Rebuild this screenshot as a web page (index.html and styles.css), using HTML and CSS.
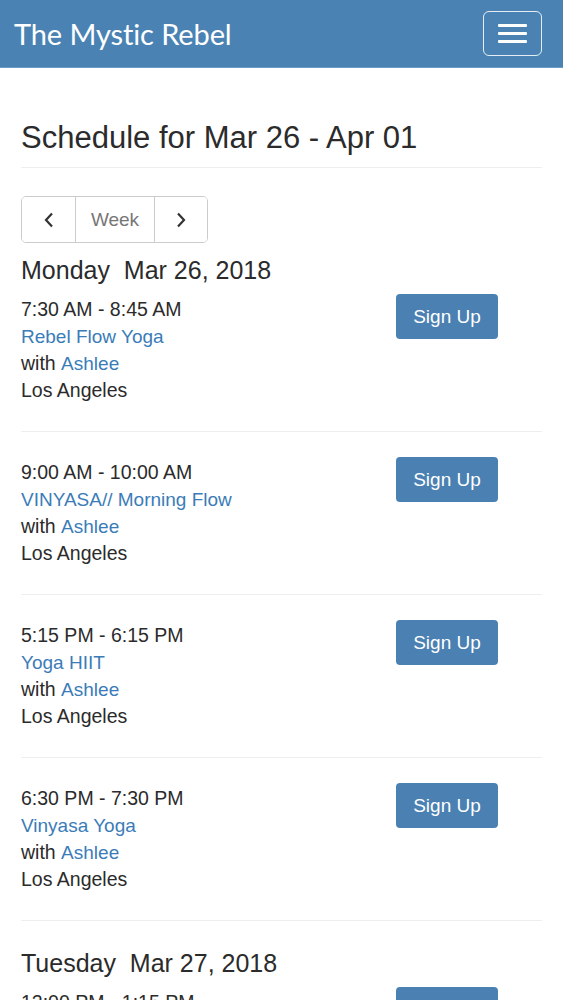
FILE: index.html
```html
<!DOCTYPE html>
<html lang="en">
<head>
    <meta charset="UTF-8">
    <meta name="viewport" content="width=device-width, initial-scale=1.0">
    <title>Schedule | The Mystic Rebel</title>
    <link rel="stylesheet" href="styles.css">
</head>
<body>
<nav class="navbar">
    <a class="brand" href="#">The Mystic Rebel</a>
    <button class="toggler" aria-label="Menu">
        <span></span><span></span><span></span>
    </button>
</nav>

<main class="container">
    <h1 class="page-title">Schedule for Mar 26 - Apr 01</h1>
    <hr class="title-rule">

    <div class="week-nav">
        <button class="nav-btn" aria-label="Previous week">
            <svg width="12" height="16" viewBox="0 0 12 16"><polyline points="9,1.5 3,8 9,14.5" fill="none" stroke="#333" stroke-width="2.2"/></svg>
        </button>
        <button class="nav-btn week">Week</button>
        <button class="nav-btn" aria-label="Next week">
            <svg width="12" height="16" viewBox="0 0 12 16"><polyline points="3,1.5 9,8 3,14.5" fill="none" stroke="#333" stroke-width="2.2"/></svg>
        </button>
    </div>

    <section class="day">
        <h3>Monday&nbsp; Mar 26, 2018</h3>

        <div class="session">
            <div class="info">
                <div>7:30 AM - 8:45 AM</div>
                <a href="#">Rebel Flow Yoga</a>
                <div>with <a href="#">Ashlee</a></div>
                <div>Los Angeles</div>
            </div>
            <button class="signup">Sign Up</button>
        </div>

        <div class="session">
            <div class="info">
                <div>9:00 AM - 10:00 AM</div>
                <a href="#">VINYASA// Morning Flow</a>
                <div>with <a href="#">Ashlee</a></div>
                <div>Los Angeles</div>
            </div>
            <button class="signup">Sign Up</button>
        </div>

        <div class="session">
            <div class="info">
                <div>5:15 PM - 6:15 PM</div>
                <a href="#">Yoga HIIT</a>
                <div>with <a href="#">Ashlee</a></div>
                <div>Los Angeles</div>
            </div>
            <button class="signup">Sign Up</button>
        </div>

        <div class="session">
            <div class="info">
                <div>6:30 PM - 7:30 PM</div>
                <a href="#">Vinyasa Yoga</a>
                <div>with <a href="#">Ashlee</a></div>
                <div>Los Angeles</div>
            </div>
            <button class="signup">Sign Up</button>
        </div>
    </section>

    <section class="day">
        <h3>Tuesday&nbsp; Mar 27, 2018</h3>

        <div class="session">
            <div class="info">
                <div>12:00 PM - 1:15 PM</div>
                <a href="#">Rebel Flow Yoga</a>
                <div>with <a href="#">Ashlee</a></div>
                <div>Los Angeles</div>
            </div>
            <button class="signup">Sign Up</button>
        </div>
    </section>
</main>
</body>
</html>
```

FILE: styles.css
```css
body {
    margin: 0;
    font-family: "Liberation Sans", Arial, sans-serif;
    color: #2b2b2b;
    background: #fff;
}

a {
    color: #3b7cb8;
    text-decoration: none;
}

.navbar {
    display: flex;
    align-items: center;
    justify-content: space-between;
    height: 67px;
    padding: 0 21px 0 14px;
    background-color: #4a83b3;
    border-bottom: 1px solid #6d9cc4;
}

.brand {
    color: #fff;
    font-family: Lato, sans-serif;
    font-size: 29px;
    letter-spacing: -0.1px;
}

.toggler {
    display: flex;
    flex-direction: column;
    justify-content: center;
    gap: 5px;
    width: 59px;
    height: 45px;
    padding: 0 14px;
    background: transparent;
    border: 1.5px solid rgba(255, 255, 255, 0.85);
    border-radius: 6px;
}

.toggler span {
    display: block;
    height: 3px;
    background: #fff;
    border-radius: 1px;
}

.container {
    padding: 0 21px;
}

.page-title {
    margin: 54px 0 0;
    font-size: 31px;
    font-weight: normal;
    line-height: 32px;
}

.title-rule {
    margin: 13px 0 28px;
    border: 0;
    border-top: 1px solid #eee;
}

.week-nav {
    display: inline-flex;
    height: 45px;
    border: 1px solid #ccc;
    border-radius: 5px;
    overflow: hidden;
}

.nav-btn {
    display: flex;
    align-items: center;
    justify-content: center;
    width: 53px;
    padding: 0;
    background: #fff;
    border: 0;
    font-family: inherit;
    font-size: 19px;
    color: #777;
}

.nav-btn + .nav-btn {
    border-left: 1px solid #ccc;
}

.nav-btn.week {
    width: 79px;
}

.day h3 {
    margin: 15px 0 14px;
    font-size: 25px;
    font-weight: normal;
    line-height: 24px;
}

.day + .day h3 {
    margin-top: 30px;
}

.session {
    display: flex;
    justify-content: space-between;
    align-items: flex-start;
    padding: 0 0 27px;
    border-bottom: 1px solid #eee;
    font-size: 19.5px;
    line-height: 27px;
}

.session + .session {
    padding-top: 27px;
}

.info a {
    display: block;
    font-size: 19px;
}

.info div a {
    display: inline;
}

.signup {
    width: 102px;
    height: 45px;
    margin: -2px 44px 0 0;
    background-color: #4a80b2;
    color: #fff;
    border: 0;
    border-radius: 4px;
    font-family: inherit;
    font-size: 19px;
    cursor: pointer;
}
```
